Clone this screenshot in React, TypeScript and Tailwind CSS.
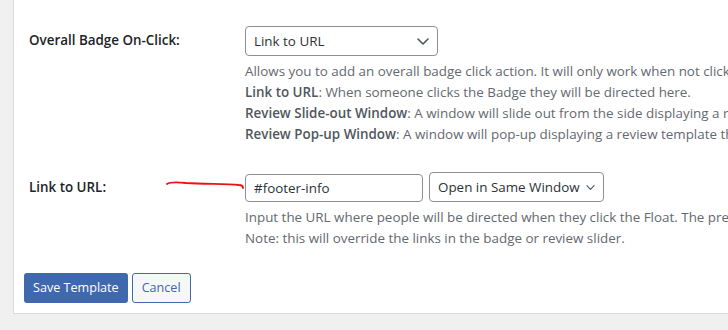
import React from "react";

function Chevron({ className }: { className?: string }) {
  return (
    <svg className={className} viewBox="0 0 12 7" fill="none">
      <path d="M1 1l5 5 5-5" stroke="#50575e" strokeWidth="1.6" strokeLinecap="round" strokeLinejoin="round" />
    </svg>
  );
}

export default function App() {
  return (
    <div className="w-[728px] h-[330px] overflow-hidden bg-[#f0f0f1] pl-[13px] font-['Open_Sans',sans-serif] text-[13.4px]">
      <div className="relative h-[314px] bg-white border-l border-b border-[#dcdcde] pl-[15px] pt-[26px]">
        {/* row 1 */}
        <div className="flex">
          <div className="w-[216px] shrink-0 pt-[4px] leading-[21px] font-semibold text-[#1d2327]">
            Overall Badge On-Click:
          </div>
          <div className="min-w-0 whitespace-nowrap">
            <div className="flex items-center justify-between w-[193px] h-[30px] rounded-[4px] border border-[#8c8f94] pl-[8px] pr-[8px] text-[#2c3338]">
              <span>Link to URL</span>
              <Chevron className="w-[12px] h-[7px]" />
            </div>
            <div className="mt-[5px] leading-[21px] text-[#646970]">
              <p>Allows you to add an overall badge click action. It will only work when not clicking on a review.</p>
              <p><b className="font-semibold text-[#50575e]">Link to URL</b>: When someone clicks the Badge they will be directed here.</p>
              <p><b className="font-semibold text-[#50575e]">Review Slide-out Window</b>: A window will slide out from the side displaying a review template.</p>
              <p><b className="font-semibold text-[#50575e]">Review Pop-up Window</b>: A window will pop-up displaying a review template that you choose.</p>
            </div>
          </div>
        </div>

        {/* row 2 */}
        <div className="flex mt-[27px]">
          <div className="w-[216px] shrink-0 pt-[5px] leading-[21px] font-semibold text-[#1d2327]">
            Link to URL:
          </div>
          <div className="min-w-0 whitespace-nowrap">
            <div className="flex items-end gap-[6px]">
              <div className="flex items-center w-[178px] h-[28px] rounded-[4px] border border-[#8c8f94] px-[8px] text-[#2c3338]">
                #footer-info
              </div>
              <div className="flex items-center gap-[6px] h-[30px] rounded-[4px] border border-[#8c8f94] pl-[8px] pr-[8px] text-[#2c3338]">
                <span>Open in Same Window</span>
                <Chevron className="w-[9px] h-[5px]" />
              </div>
            </div>
            <div className="mt-[5px] leading-[21px] text-[#646970]">
              <p>Input the URL where people will be directed when they click the Float. The preview will not redirect.</p>
              <p>Note: this will override the links in the badge or review slider.</p>
            </div>
          </div>
        </div>

        <div className="flex gap-[4px] mt-[24px] -ml-[5px]">
          <button className="h-[30px] px-[9px] rounded-[3px] bg-[#4068ae] text-white text-[12.6px]">Save Template</button>
          <button className="h-[30px] px-[9px] rounded-[3px] border border-[#4068ae] bg-[#f6f7f7] text-[#4068ae] text-[12.6px]">Cancel</button>
        </div>

        <svg className="absolute left-[152px] top-[180px] w-[80px] h-[12px]" viewBox="0 0 80 12" fill="none">
          <path d="M1 4C4 2 9 2 20 3C40 4 60 4 73 5C76 5 77 6 77 8" stroke="#ee1111" strokeWidth="1.8" strokeLinecap="round" />
        </svg>
      </div>
    </div>
  );
}
